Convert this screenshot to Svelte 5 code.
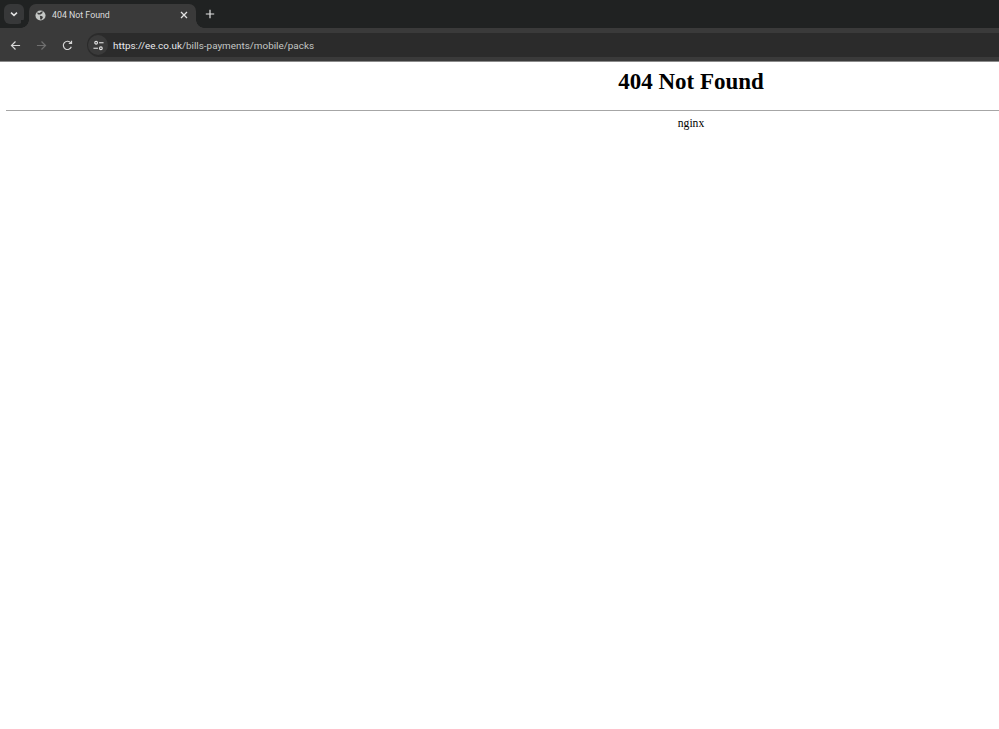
<script>
  let url = { host: 'https://ee.co.uk', path: '/bills-payments/mobile/packs' };
</script>

<div class="browser">
  <div class="tabstrip">
    <button class="tab-search" aria-label="Search tabs">
      <svg width="10" height="10" viewBox="0 0 10 10"><path d="M2 3.6 5 6.4 8 3.6" fill="none" stroke="#e3e3e3" stroke-width="1.5"/></svg>
    </button>
    <div class="tab">
      <svg class="globe" width="11" height="11" viewBox="0 0 12 12">
        <circle cx="6" cy="6" r="5.5" fill="#c4c7c5"/>
        <path d="M2.2 2.6 5 3.4 6.4 2.2 8.4 1.2 8 3.6 5.8 5 3.2 4.8ZM5.2 6.4 8 6.8 8.6 8.4 6.8 10.6 5.6 10 5.6 8Z" fill="#3c3c3c"/>
      </svg>
      <span class="tab-title">404 Not Found</span>
      <svg class="close" width="8" height="8" viewBox="0 0 8 8"><path d="M1 1 7 7M7 1 1 7" stroke="#e3e3e3" stroke-width="1.3"/></svg>
    </div>
    <svg class="plus" width="10" height="10" viewBox="0 0 10 10"><path d="M5 .8V9.2M.8 5H9.2" stroke="#e3e3e3" stroke-width="1.2"/></svg>
  </div>
  <div class="toolbar">
    <svg width="11" height="11" viewBox="0 0 12 12" class="nav"><path d="M11 6H2M6 1.6 1.6 6 6 10.4" fill="none" stroke="#d6d6d6" stroke-width="1.3"/></svg>
    <svg width="11" height="11" viewBox="0 0 12 12" class="nav"><path d="M1 6H10M6 1.6 10.4 6 6 10.4" fill="none" stroke="#6f6f6f" stroke-width="1.3"/></svg>
    <svg width="11" height="11" viewBox="0 0 12 12" class="nav"><path d="M10.2 7.4A4.5 4.5 0 1 1 9.6 3.2M10.4 .8V3.8H7.4" fill="none" stroke="#d6d6d6" stroke-width="1.3"/></svg>
    <div class="omnibox">
      <span class="chip">
        <svg width="11" height="11" viewBox="0 0 12 12">
          <g fill="none" stroke="#e3e3e3" stroke-width="1.2"><circle cx="3.4" cy="3" r="1.5"/><path d="M6.6 3H11.5"/><circle cx="8.6" cy="9" r="1.5"/><path d="M.5 9H5.4"/></g>
        </svg>
      </span>
      <span class="url"><span class="host">{url.host}</span>{url.path}</span>
    </div>
  </div>
</div>

<main>
  <div class="document">
    <h1>404 Not Found</h1>
    <hr />
    <p>nginx</p>
  </div>
</main>

<style>
  :global(body) {
    background: #fff;
  }
  .browser {
    font-family: "Roboto", "Noto Sans", sans-serif;
  }
  .tabstrip {
    height: 28px;
    background: #202222;
    display: flex;
    align-items: flex-end;
    padding-left: 4px;
  }
  .tab-search {
    width: 20px;
    height: 20px;
    margin-bottom: 4px;
    padding: 0;
    border: 0;
    border-radius: 6px;
    background: #373839;
    display: flex;
    align-items: center;
    justify-content: center;
  }
  .tab {
    position: relative;
    width: 167px;
    height: 24px;
    margin-left: 5px;
    padding: 0 8px 2px 6px;
    box-sizing: border-box;
    background: #3a3a3a;
    border-radius: 7px 7px 0 0;
    display: flex;
    align-items: center;
    color: #dcdcdc;
    font-size: 8.8px;
  }
  /* concave feet where the tab meets the toolbar */
  .tab::before,
  .tab::after {
    content: "";
    position: absolute;
    bottom: 0;
    width: 8px;
    height: 8px;
  }
  .tab::before {
    left: -8px;
    background: radial-gradient(circle at 0 0, #202222 7.5px, #3a3a3a 8px);
  }
  .tab::after {
    right: -8px;
    background: radial-gradient(circle at 100% 0, #202222 7.5px, #3a3a3a 8px);
  }
  .globe {
    margin-right: 6px;
  }
  .tab-title {
    flex: 1;
  }
  .plus {
    margin: 0 0 9px 9px;
  }
  .toolbar {
    height: 34px;
    background: #3a3a3a;
    border-bottom: 1px solid #8a8a8a;
    box-sizing: border-box;
    display: flex;
    align-items: center;
    padding: 5px 0 4px 10px;
    gap: 15px;
  }
  .nav {
    flex: none;
  }
  .omnibox {
    flex: 1;
    height: 24px;
    margin-left: -1px;
    background: #2b2b2b;
    border-radius: 12px 0 0 12px;
    display: flex;
    align-items: center;
    padding-left: 1px;
    font-size: 9.9px;
    color: #c4c7c5;
  }
  .chip {
    width: 20px;
    height: 20px;
    border-radius: 50%;
    background: #3a3a3a;
    display: flex;
    align-items: center;
    justify-content: center;
    margin-right: 5px;
  }
  .host {
    color: #e8eaed;
  }
  /* the page was captured wider than the window, so it is cut off on the right */
  main {
    overflow: hidden;
  }
  .document {
    width: 1370px;
    margin-left: 6px;
    text-align: center;
    font-family: "Liberation Serif", "Times New Roman", serif;
    color: #000;
  }
  h1 {
    margin: 0;
    padding-top: 6px;
    font-size: 23px;
    line-height: 27px;
    font-weight: bold;
  }
  hr {
    margin: 15px 0 0;
    border: 0;
    height: 1px;
    background: #a6a6a6;
  }
  p {
    margin: 6px 0 0;
    font-size: 11.6px;
    line-height: 14px;
  }
</style>
